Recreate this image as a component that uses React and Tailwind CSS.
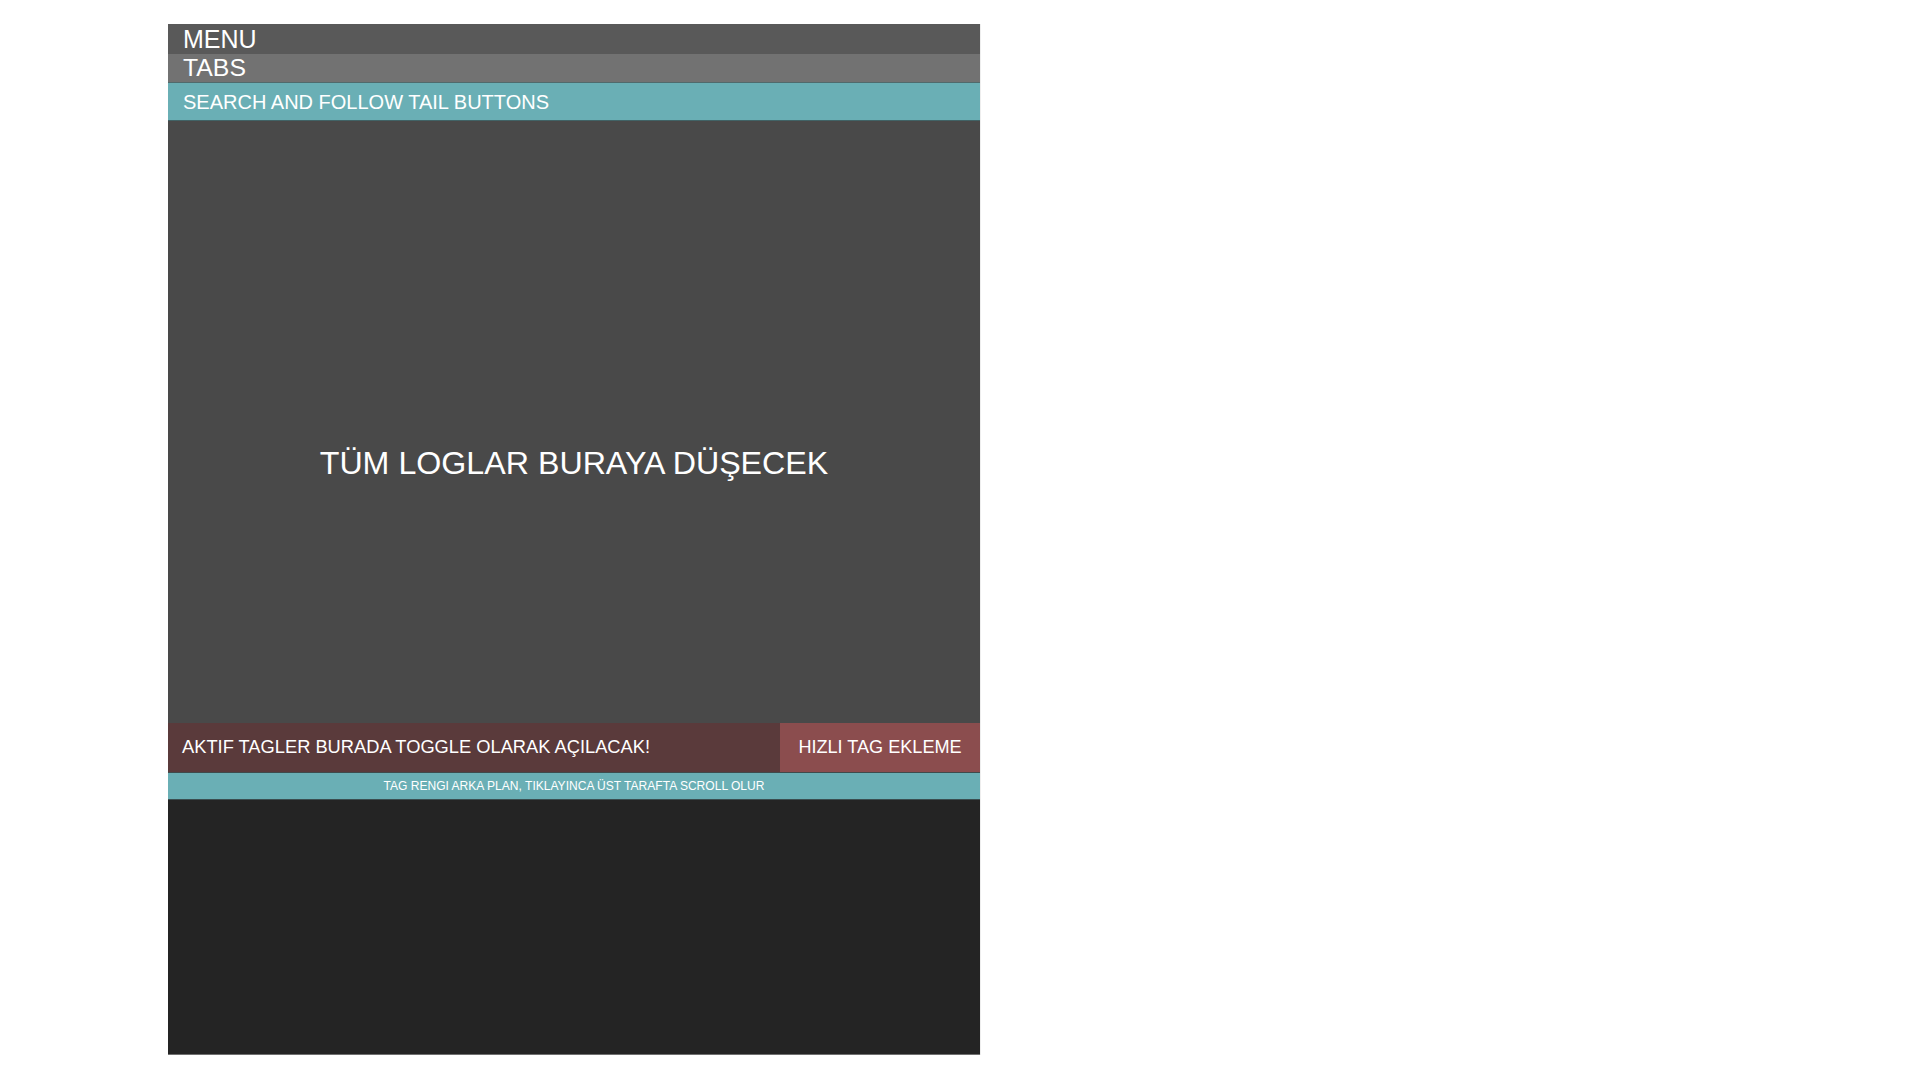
export default function App() {
  return (
    <div className="min-h-screen w-full bg-white pl-[168px] pt-[24px]" style={{ fontFamily: '"Liberation Sans", Arial, sans-serif' }}>
      <div className="flex w-[812px] flex-col text-white shadow-[1px_0_0_#eeeeee]">
        <div className="flex h-[30px] items-center bg-[#595959] pl-[15px] text-[25px] leading-none">MENU</div>
        <div className="flex h-[29px] items-center border-b border-[#506a6c] bg-[#727272] pl-[15px] text-[24.8px] leading-none">TABS</div>
        <div className="flex h-[38px] items-center border-b border-[#416366] bg-[#6aafb5] pl-[15px] pt-[1px] text-[20px] leading-none">SEARCH AND FOLLOW TAIL BUTTONS</div>
        <div className="flex h-[602px] justify-center bg-[#494949] pt-[324px] text-[32.2px] leading-[1.15]">TÜM LOGLAR BURAYA DÜŞECEK</div>
        <div className="flex h-[50px] border-b border-[#3f4b4c]">
          <div className="flex flex-1 items-center bg-[#5a3a3b] pb-[1px] pl-[14px] text-[18.3px] leading-none">AKTIF TAGLER BURADA TOGGLE OLARAK AÇILACAK!</div>
          <div className="flex w-[200px] items-center justify-center bg-[#8b4d4e] text-[18.1px] leading-none">HIZLI TAG EKLEME</div>
        </div>
        <div className="flex h-[26px] items-center justify-center bg-[#6aafb5] text-[12.05px] leading-none">TAG RENGI ARKA PLAN, TIKLAYINCA ÜST TARAFTA SCROLL OLUR</div>
        <div className="h-[256px] border-t border-[#3b4e50] border-b border-b-[#707070] bg-[#242424]"></div>
      </div>
    </div>
  );
}
